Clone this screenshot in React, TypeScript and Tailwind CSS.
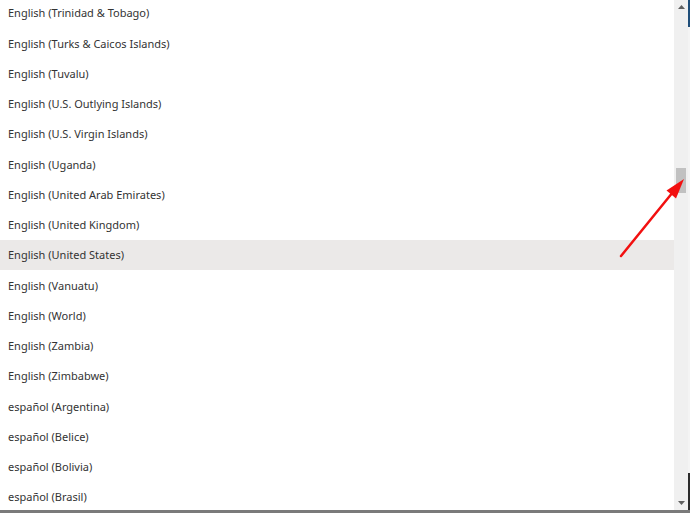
import React from "react";

const items = [
  "English (Trinidad & Tobago)",
  "English (Turks & Caicos Islands)",
  "English (Tuvalu)",
  "English (U.S. Outlying Islands)",
  "English (U.S. Virgin Islands)",
  "English (Uganda)",
  "English (United Arab Emirates)",
  "English (United Kingdom)",
  "English (United States)",
  "English (Vanuatu)",
  "English (World)",
  "English (Zambia)",
  "English (Zimbabwe)",
  "español (Argentina)",
  "español (Belice)",
  "español (Bolivia)",
  "español (Brasil)",
];

export default function App() {
  return (
    <div className="relative w-[690px] h-[513px] overflow-hidden bg-white" style={{ fontFamily: '"Noto Sans", "Open Sans", sans-serif' }}>
      <div className="flex h-[510px]">
        <div className="flex-1 overflow-hidden">
          <div className="-mt-[2px] flex flex-col">
            {items.map((t, i) => (
              <div
                key={t}
                className={`h-[30.25px] shrink-0 flex items-center pl-[8px] pt-[1px] text-[11px] text-[#333333] ${i === 8 ? "bg-[#ebe9e8]" : ""}`}
              >
                {t}
              </div>
            ))}
          </div>
        </div>
        <div className="w-[14px] bg-[#f0f0f0] flex flex-col items-center">
          <div className="h-[14px] w-full flex items-center justify-center">
            <svg width="7" height="4" viewBox="0 0 7 4"><path d="M3.5 0 L7 4 L0 4 Z" fill="#606060" /></svg>
          </div>
          <div className="mt-[154px] w-[10px] h-[25px] bg-[#c1c1c1]" />
          <div className="flex-1" />
          <div className="h-[14px] w-full flex items-center justify-center">
            <svg width="7" height="4" viewBox="0 0 7 4"><path d="M0 0 L7 0 L3.5 4 Z" fill="#606060" /></svg>
          </div>
        </div>
        <div className="w-[2px] flex flex-col bg-[#f4f4f4]">
          <div className="h-[27px] bg-[#1f4e79]" />
          <div className="flex-1" />
          <div className="h-[37px] bg-[#2b2b2b]" />
        </div>
      </div>
      <div className="h-[3px] bg-[#7a7a7a]" />
      <svg className="absolute left-0 top-0 pointer-events-none" width="690" height="513">
        <line x1="621" y1="256" x2="673" y2="192" stroke="#f21010" strokeWidth="2.5" strokeLinecap="round" />
        <path d="M684 179 L676 198.5 L666.5 190.5 Z" fill="#f21010" />
      </svg>
    </div>
  );
}
